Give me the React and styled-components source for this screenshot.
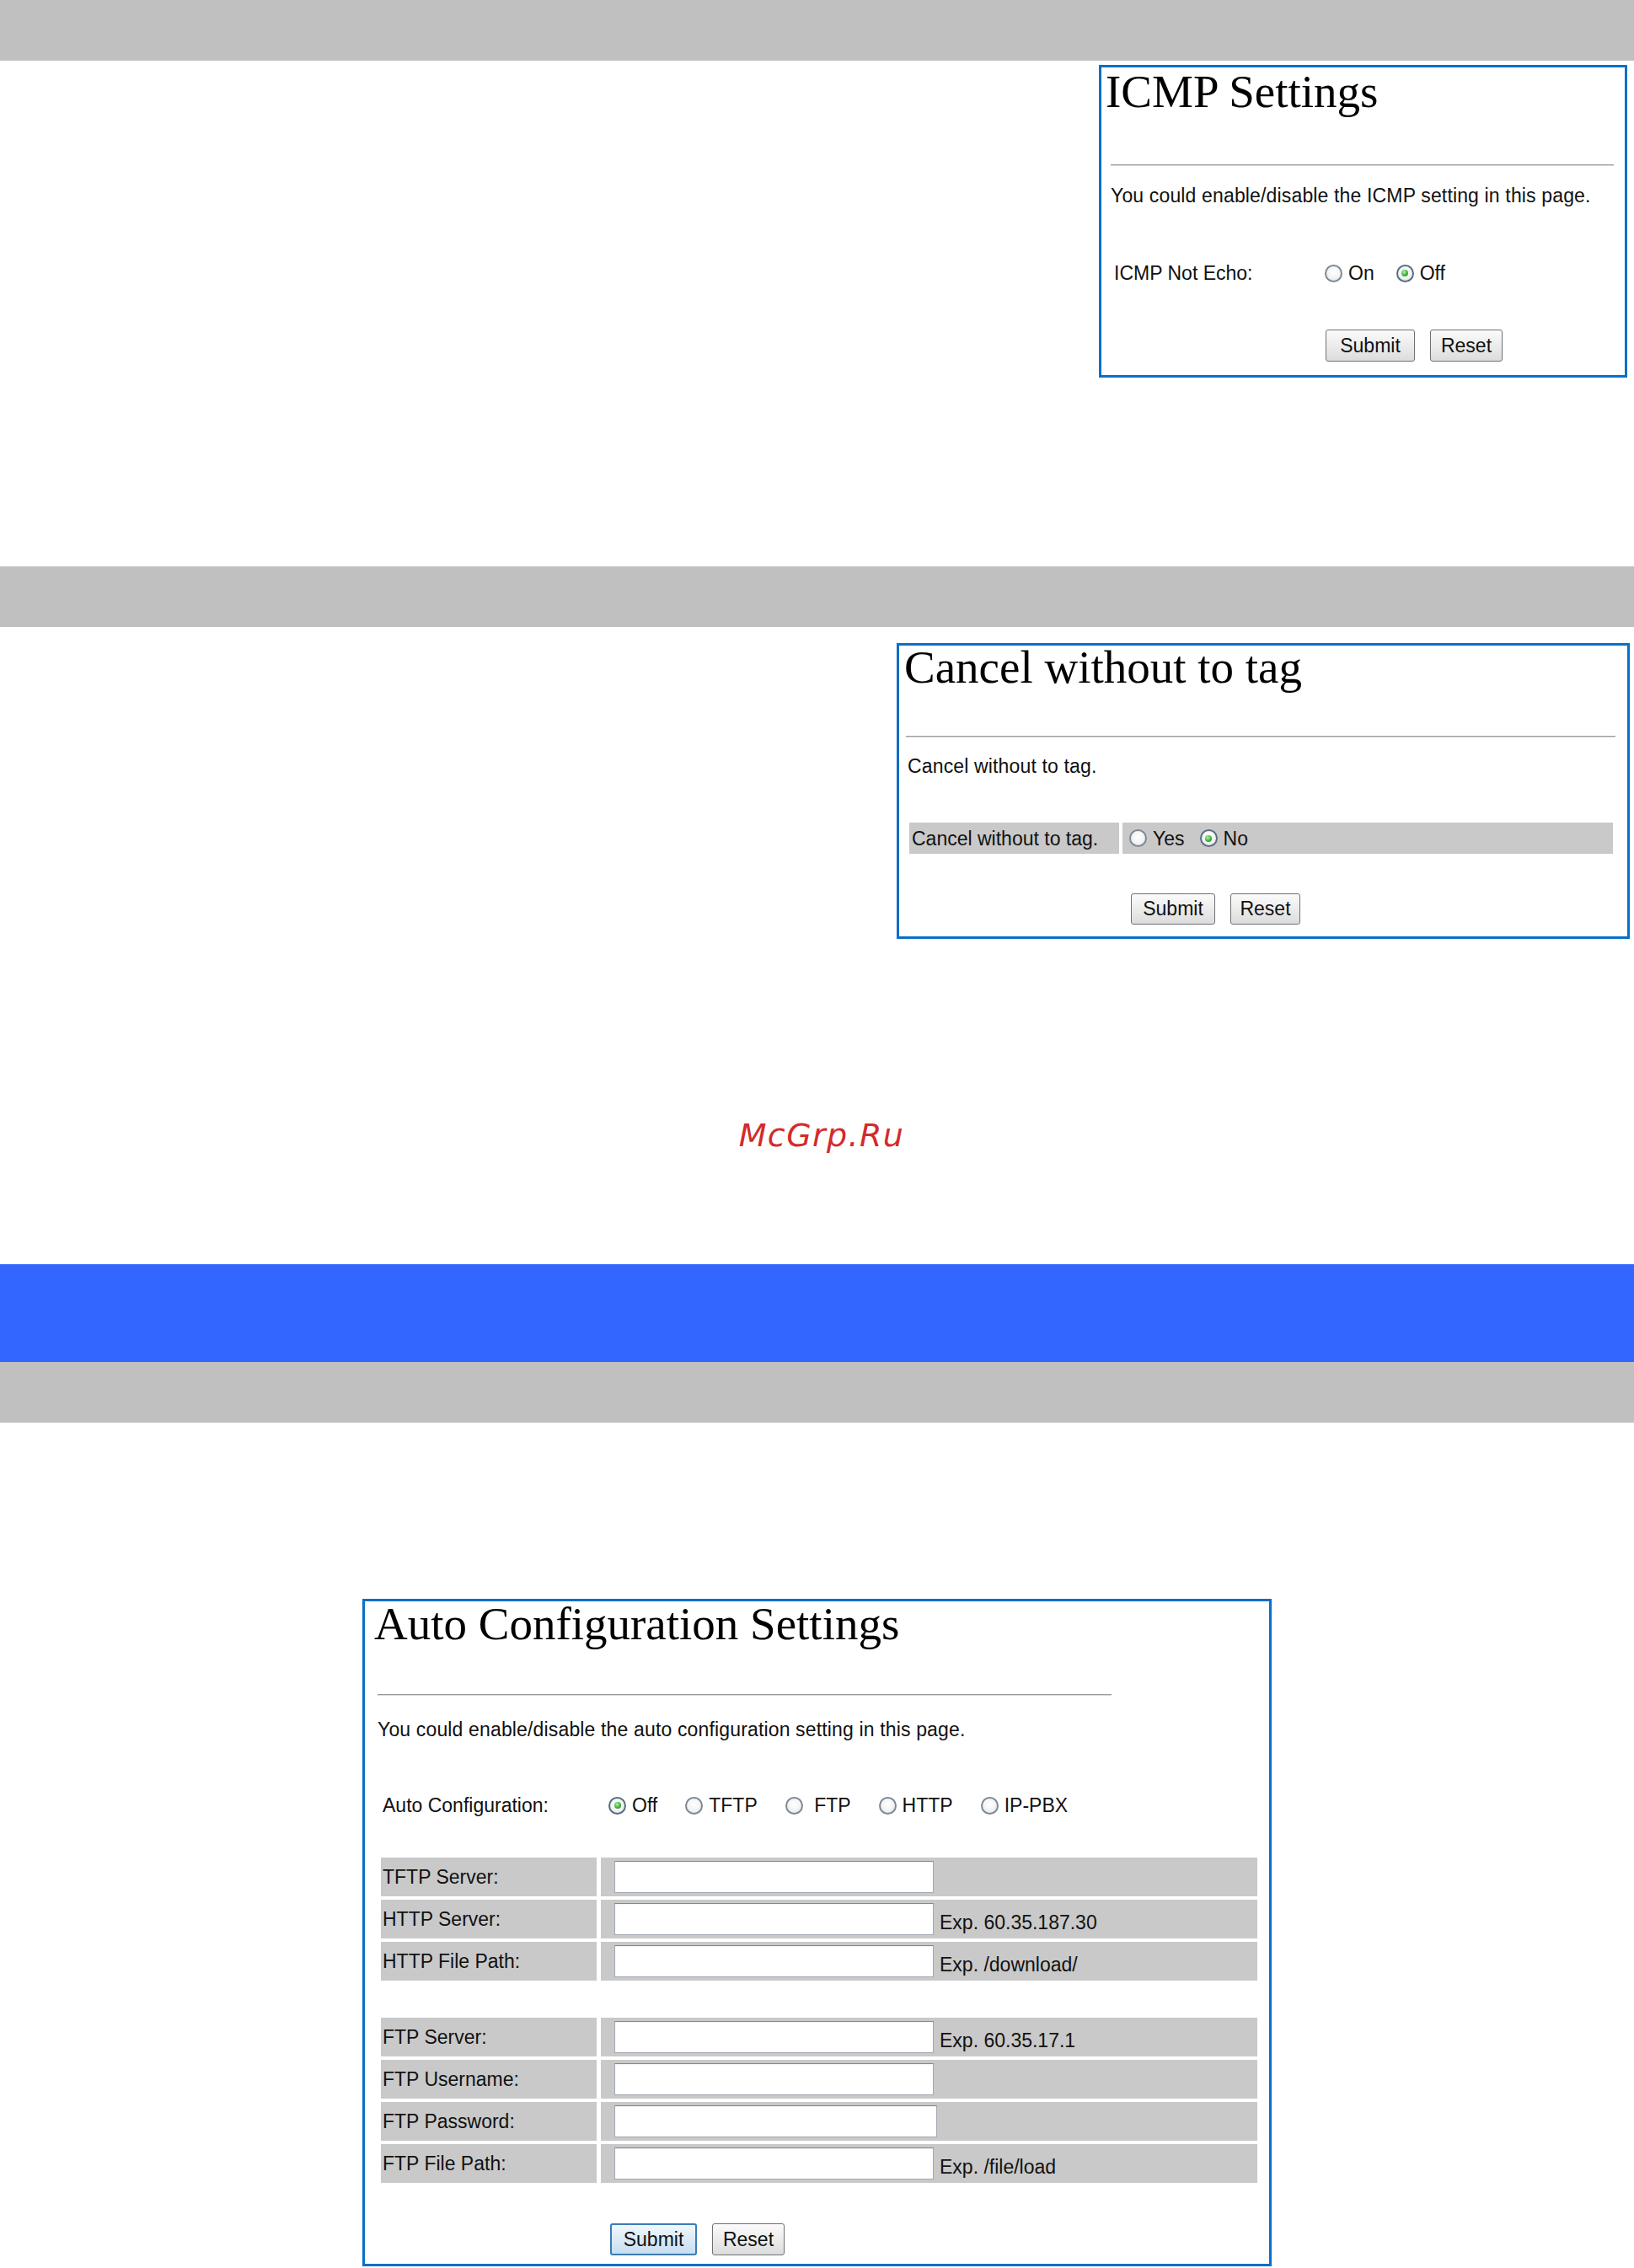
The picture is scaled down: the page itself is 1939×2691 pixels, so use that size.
import styled, { createGlobalStyle } from 'styled-components'

const Global = createGlobalStyle`
  html, body {
    margin: 0;
    padding: 0;
    background: #ffffff;
  }
  body {
    font-family: "Liberation Sans", Arial, sans-serif;
    color: #111111;
  }
`

const Page = styled.div`
  width: 100%;
  padding-bottom: 2px;
`

const Band = styled.div`
  height: ${p => p.$h}px;
  margin-top: ${p => p.$mt || 0}px;
  background: ${p => p.$color || '#c0c0c0'};
`

const Slot = styled.section`
  display: flex;
  justify-content: ${p => p.$justify || 'flex-end'};
  margin-top: ${p => p.$mt || 0}px;
  padding-right: ${p => p.$pr || 0}px;
`

const Panel = styled.div`
  box-sizing: border-box;
  width: ${p => p.$w}px;
  height: ${p => p.$h}px;
  border: 3px solid #0a6fc9;
  background: #ffffff;
  display: flex;
  flex-direction: column;
  align-items: flex-start;
`

const Title = styled.h1`
  margin: ${p => p.$mt}px 0 0 ${p => p.$ml}px;
  font-family: "Liberation Serif", "Times New Roman", serif;
  font-weight: 400;
  font-size: 55px;
  line-height: 55px;
  color: #000000;
  white-space: nowrap;
`

const Rule = styled.hr`
  box-sizing: border-box;
  width: ${p => p.$w}px;
  height: 2px;
  margin: ${p => p.$mt}px 0 0 ${p => p.$ml}px;
  border: 0;
  border-top: 1px solid #9c9c9c;
  border-bottom: 1px solid #d6d6d6;
`

const Desc = styled.p`
  margin: ${p => p.$mt}px 0 0 ${p => p.$ml}px;
  font-size: 23px;
  line-height: 26px;
  letter-spacing: 0.15px;
  white-space: nowrap;
`

const FieldRow = styled.div`
  display: grid;
  grid-template-columns: ${p => p.$cols};
  column-gap: ${p => p.$gap || 0}px;
  margin: ${p => p.$mt}px 0 0 ${p => p.$ml}px;
  font-size: 23px;
  line-height: 26px;
`

const Label = styled.div`
  display: flex;
  align-items: center;
  white-space: nowrap;
  padding-left: ${p => p.$pl || 0}px;
  background: ${p => (p.$shaded ? '#c9c9c9' : 'transparent')};
  height: ${p => (p.$h ? `${p.$h}px` : 'auto')};
`

const Value = styled.div`
  display: flex;
  align-items: center;
  padding-left: ${p => p.$pl || 0}px;
  background: ${p => (p.$shaded ? '#c9c9c9' : 'transparent')};
  height: ${p => (p.$h ? `${p.$h}px` : 'auto')};
`

const RadioGroup = styled.div`
  display: flex;
  align-items: center;
  gap: ${p => p.$gap}px;
`

const Option = styled.label`
  display: inline-flex;
  align-items: center;
  gap: 7px;
  white-space: pre;
  color: #111111;
`

const RadioDot = styled.span`
  box-sizing: border-box;
  flex: none;
  width: 21px;
  height: 21px;
  border-radius: 50%;
  border: 2px solid ${p => (p.$checked ? '#5a6e82' : '#7d8996')};
  background: radial-gradient(circle at 50% 40%, #ffffff 0%, #f3f3f3 55%, #d3d8de 100%);
  display: inline-flex;
  align-items: center;
  justify-content: center;

  &::after {
    content: '';
    display: ${p => (p.$checked ? 'block' : 'none')};
    width: 8px;
    height: 8px;
    border-radius: 50%;
    background: radial-gradient(circle at 40% 35%, #b4f2ac 0%, #3fb23a 55%, #237a22 100%);
  }
`

const Buttons = styled.div`
  display: flex;
  gap: 18px;
  padding-left: ${p => p.$pl || 0}px;
`

const Button = styled.button`
  box-sizing: border-box;
  width: ${p => p.$w}px;
  height: ${p => p.$h || 38}px;
  padding: 0;
  border: ${p => (p.$primary ? '2px solid #3b7bb3' : '1.5px solid #6d7177')};
  border-radius: 3px;
  background: ${p =>
    p.$primary
      ? 'linear-gradient(#f0f8fd, #dbeaf6 50%, #c9def0)'
      : 'linear-gradient(#fbfbfb, #ececec 50%, #dcdcdc)'};
  font-family: "Liberation Sans", Arial, sans-serif;
  font-size: 23px;
  color: #111111;
`

const Table = styled.div`
  display: grid;
  grid-template-columns: 256px 779px;
  column-gap: 5px;
  row-gap: 4px;
  margin: ${p => p.$mt}px 0 0 19px;
  font-size: 23px;
  line-height: 26px;
`

const TextField = styled.input`
  box-sizing: border-box;
  width: ${p => p.$w || 379}px;
  height: 38px;
  margin: 0 0 0 16px;
  padding: 0 4px;
  border: 1.5px solid #a2aab3;
  border-top-color: #7f8994;
  background: #ffffff;
  box-shadow: inset 0 1px 2px rgba(0, 0, 0, 0.06);
  font-family: "Liberation Sans", Arial, sans-serif;
  font-size: 20px;
`

const Hint = styled.span`
  align-self: flex-end;
  margin: 0 0 6px 7px;
  white-space: nowrap;
`

const Watermark = styled.div`
  margin-top: 211px;
  padding-left: 11px;
  text-align: center;
  font-family: "DejaVu Sans", Verdana, sans-serif;
  font-style: italic;
  font-size: 38px;
  line-height: 44px;
  letter-spacing: 1.4px;
  color: #d42a2a;
`

function Radio({ checked, children }) {
  return (
    <Option>
      <RadioDot $checked={checked} />
      {children}
    </Option>
  )
}

function Field({ label, hint, w }) {
  return (
    <>
      <Label $shaded $h={46} $pl={2}>{label}</Label>
      <Value $shaded $h={46}>
        <TextField type="text" $w={w} />
        {hint && <Hint>{hint}</Hint>}
      </Value>
    </>
  )
}

function IcmpPanel() {
  return (
    <Panel $w={627} $h={371}>
      <Title $mt={1} $ml={5}>ICMP Settings</Title>
      <Rule $mt={59} $ml={11} $w={597} />
      <Desc $mt={22} $ml={11}>You could enable/disable the ICMP setting in this page.</Desc>
      <FieldRow $cols="250px auto" $mt={66} $ml={15}>
        <Label>ICMP Not Echo:</Label>
        <Value>
          <RadioGroup $gap={26}>
            <Radio>On</Radio>
            <Radio checked>Off</Radio>
          </RadioGroup>
        </Value>
      </FieldRow>
      <FieldRow $cols="251px auto" $mt={54} $ml={15}>
        <div />
        <Buttons>
          <Button $w={106}>Submit</Button>
          <Button $w={86}>Reset</Button>
        </Buttons>
      </FieldRow>
    </Panel>
  )
}

function TagPanel() {
  return (
    <Panel $w={870} $h={351}>
      <Title $mt={-2} $ml={6}>Cancel without to tag</Title>
      <Rule $mt={54} $ml={8} $w={842} />
      <Desc $mt={21} $ml={10}>Cancel without to tag.</Desc>
      <FieldRow $cols="249px 582px" $gap={4} $mt={54} $ml={12}>
        <Label $shaded $h={37} $pl={3}>Cancel without to tag.</Label>
        <Value $shaded $h={37} $pl={8}>
          <RadioGroup $gap={18}>
            <Radio>Yes</Radio>
            <Radio checked>No</Radio>
          </RadioGroup>
        </Value>
      </FieldRow>
      <FieldRow $cols="249px auto" $gap={4} $mt={47} $ml={12}>
        <div />
        <Buttons $pl={10}>
          <Button $w={100} $h={37}>Submit</Button>
          <Button $w={83} $h={37}>Reset</Button>
        </Buttons>
      </FieldRow>
    </Panel>
  )
}

function AutoPanel() {
  return (
    <Panel $w={1079} $h={792}>
      <Title $mt={-1} $ml={11}>Auto Configuration Settings</Title>
      <Rule $mt={56} $ml={15} $w={871} />
      <Desc $mt={27} $ml={15}>You could enable/disable the auto configuration setting in this page.</Desc>
      <FieldRow $cols="268px auto" $mt={64} $ml={21}>
        <Label>Auto Configuration:</Label>
        <Value>
          <RadioGroup $gap={33}>
            <Radio checked>Off</Radio>
            <Radio>TFTP</Radio>
            <Radio> FTP</Radio>
            <Radio>HTTP</Radio>
            <Radio>IP-PBX</Radio>
          </RadioGroup>
        </Value>
      </FieldRow>
      <Table $mt={49}>
        <Field label="TFTP Server:" />
        <Field label="HTTP Server:" hint="Exp. 60.35.187.30" />
        <Field label="HTTP File Path:" hint="Exp. /download/" />
      </Table>
      <Table $mt={44}>
        <Field label="FTP Server:" hint="Exp. 60.35.17.1" />
        <Field label="FTP Username:" />
        <Field label="FTP Password:" w={383} />
        <Field label="FTP File Path:" hint="Exp. /file/load" />
      </Table>
      <FieldRow $cols="261px auto" $mt={48} $ml={19}>
        <div />
        <Buttons $pl={11}>
          <Button $primary $w={103}>Submit</Button>
          <Button $w={86}>Reset</Button>
        </Buttons>
      </FieldRow>
    </Panel>
  )
}

function App() {
  return (
    <Page>
      <Global />
      <Band $h={72} />
      <Slot $mt={5} $pr={8}>
        <IcmpPanel />
      </Slot>
      <Band $h={72} $mt={224} />
      <Slot $mt={19} $pr={5}>
        <TagPanel />
      </Slot>
      <Watermark>McGrp.Ru</Watermark>
      <Band $h={116} $mt={131} $color="#3366ff" />
      <Band $h={72} />
      <Slot $mt={209} $justify="center">
        <AutoPanel />
      </Slot>
    </Page>
  )
}

export default App
